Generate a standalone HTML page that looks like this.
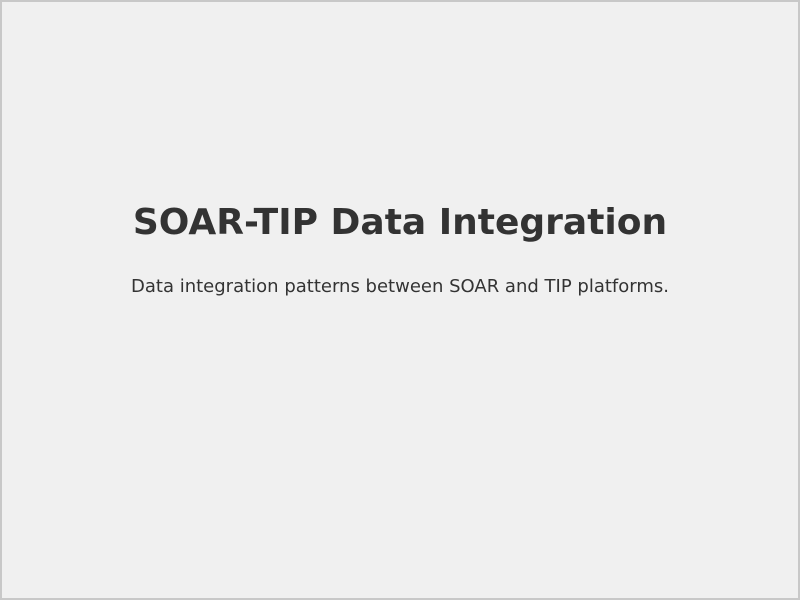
<!DOCTYPE html>
<html><head><meta charset="utf-8"><style>
html,body{margin:0;padding:0}
body{width:800px;height:600px;box-sizing:border-box;border:2px solid #c8c8c8;background:#f0f0f0;font-family:"DejaVu Sans","Liberation Sans",sans-serif;color:#333;position:relative;overflow:hidden}
h1{position:absolute;top:197px;left:0;right:0;margin:0;text-align:center;font-size:36px;font-weight:bold;line-height:48px;color:#333}
p{position:absolute;top:272px;left:0;right:0;margin:0;text-align:center;font-size:18px;line-height:26px;color:#333}
</style></head><body>
<h1>SOAR-TIP Data Integration</h1>
<p>Data integration patterns between SOAR and TIP platforms.</p>
</body></html>
